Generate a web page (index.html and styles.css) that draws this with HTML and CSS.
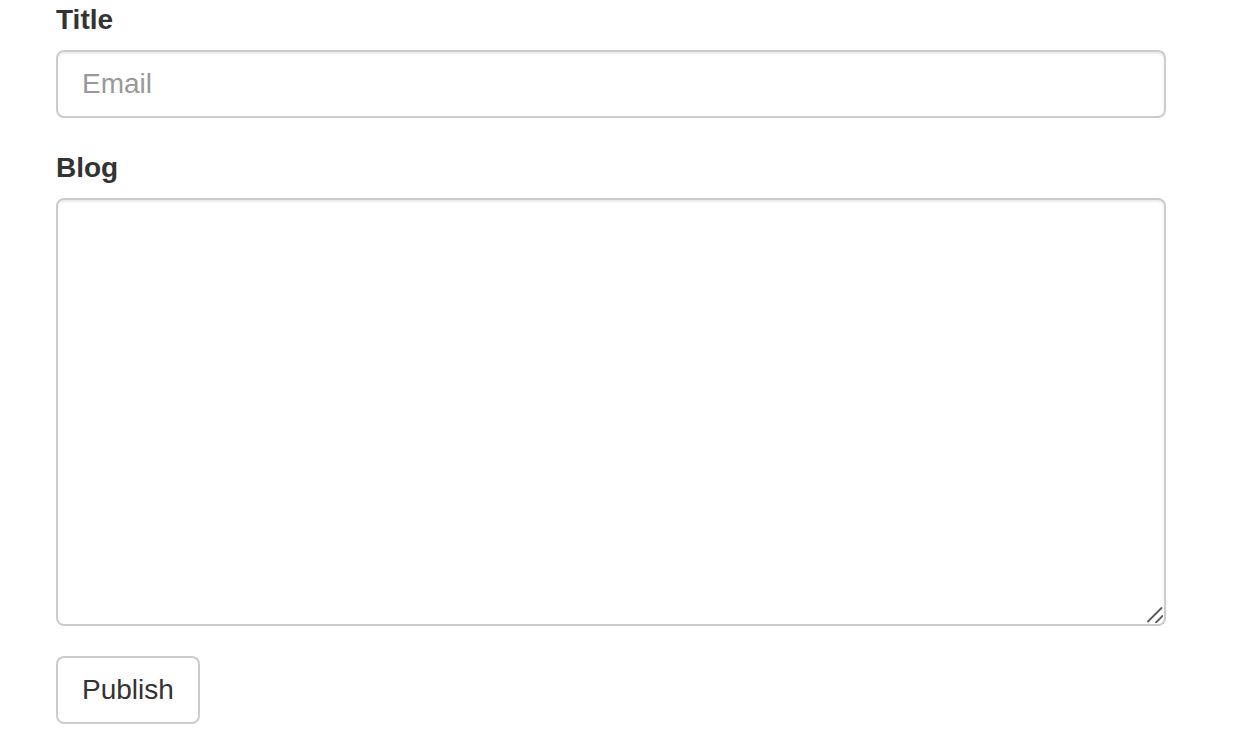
FILE: index.html
```html
<!DOCTYPE html>
<html>
<head>
<meta charset="utf-8">
<link rel="stylesheet" href="styles.css">
</head>
<body>
<form class="form">
  <div class="form-group">
    <label class="label" for="title">Title</label>
    <input class="control" id="title" type="text" placeholder="Email">
  </div>
  <div class="form-group">
    <label class="label" for="blog">Blog</label>
    <div class="area-wrap">
      <textarea class="control area" id="blog"></textarea>
      <svg class="grip" width="16" height="16" viewBox="0 0 16 16" aria-hidden="true">
        <path d="M1 14.5L14.5 1M9 15.5L15.5 9" stroke="#5a5a5a" stroke-width="1.8" stroke-linecap="round" fill="none"/>
      </svg>
    </div>
  </div>
  <button class="btn" type="button">Publish</button>
</form>
</body>
</html>
```

FILE: styles.css
```css
html, body {
  margin: 0;
  padding: 0;
  background: #fff;
}
body {
  font-family: "Liberation Sans", Arial, Helvetica, sans-serif;
  color: #333;
  font-size: 28px;
  line-height: 40px;
}
.form {
  width: 1110px;
  padding-left: 56px;
  display: flex;
  flex-direction: column;
  align-items: flex-start;
}
.form-group {
  width: 100%;
  display: flex;
  flex-direction: column;
  margin-bottom: 30px;
}
.label {
  display: block;
  font-weight: bold;
  font-size: 28px;
  line-height: 40px;
  margin-bottom: 10px;
  color: #333;
}
.control {
  box-sizing: border-box;
  width: 100%;
  height: 68px;
  padding: 12px 24px;
  font-family: "Liberation Sans", Arial, Helvetica, sans-serif;
  font-size: 28px;
  line-height: 40px;
  color: #555;
  background: #fff;
  border: 2px solid #ccc;
  border-radius: 8px;
  box-shadow: inset 0 2px 2px rgba(0, 0, 0, 0.075);
  margin: 0;
  outline: none;
}
.control::placeholder {
  color: #999;
}
.area-wrap {
  position: relative;
  width: 100%;
}
.area {
  height: 428px;
  resize: none;
  display: block;
}
.grip {
  position: absolute;
  right: 3px;
  bottom: 3px;
  pointer-events: none;
}
.btn {
  box-sizing: border-box;
  height: 68px;
  padding: 12px 24px;
  font-family: "Liberation Sans", Arial, Helvetica, sans-serif;
  font-size: 28px;
  line-height: 40px;
  color: #333;
  background: #fff;
  border: 2px solid #ccc;
  border-radius: 8px;
  margin: 0;
}
```
